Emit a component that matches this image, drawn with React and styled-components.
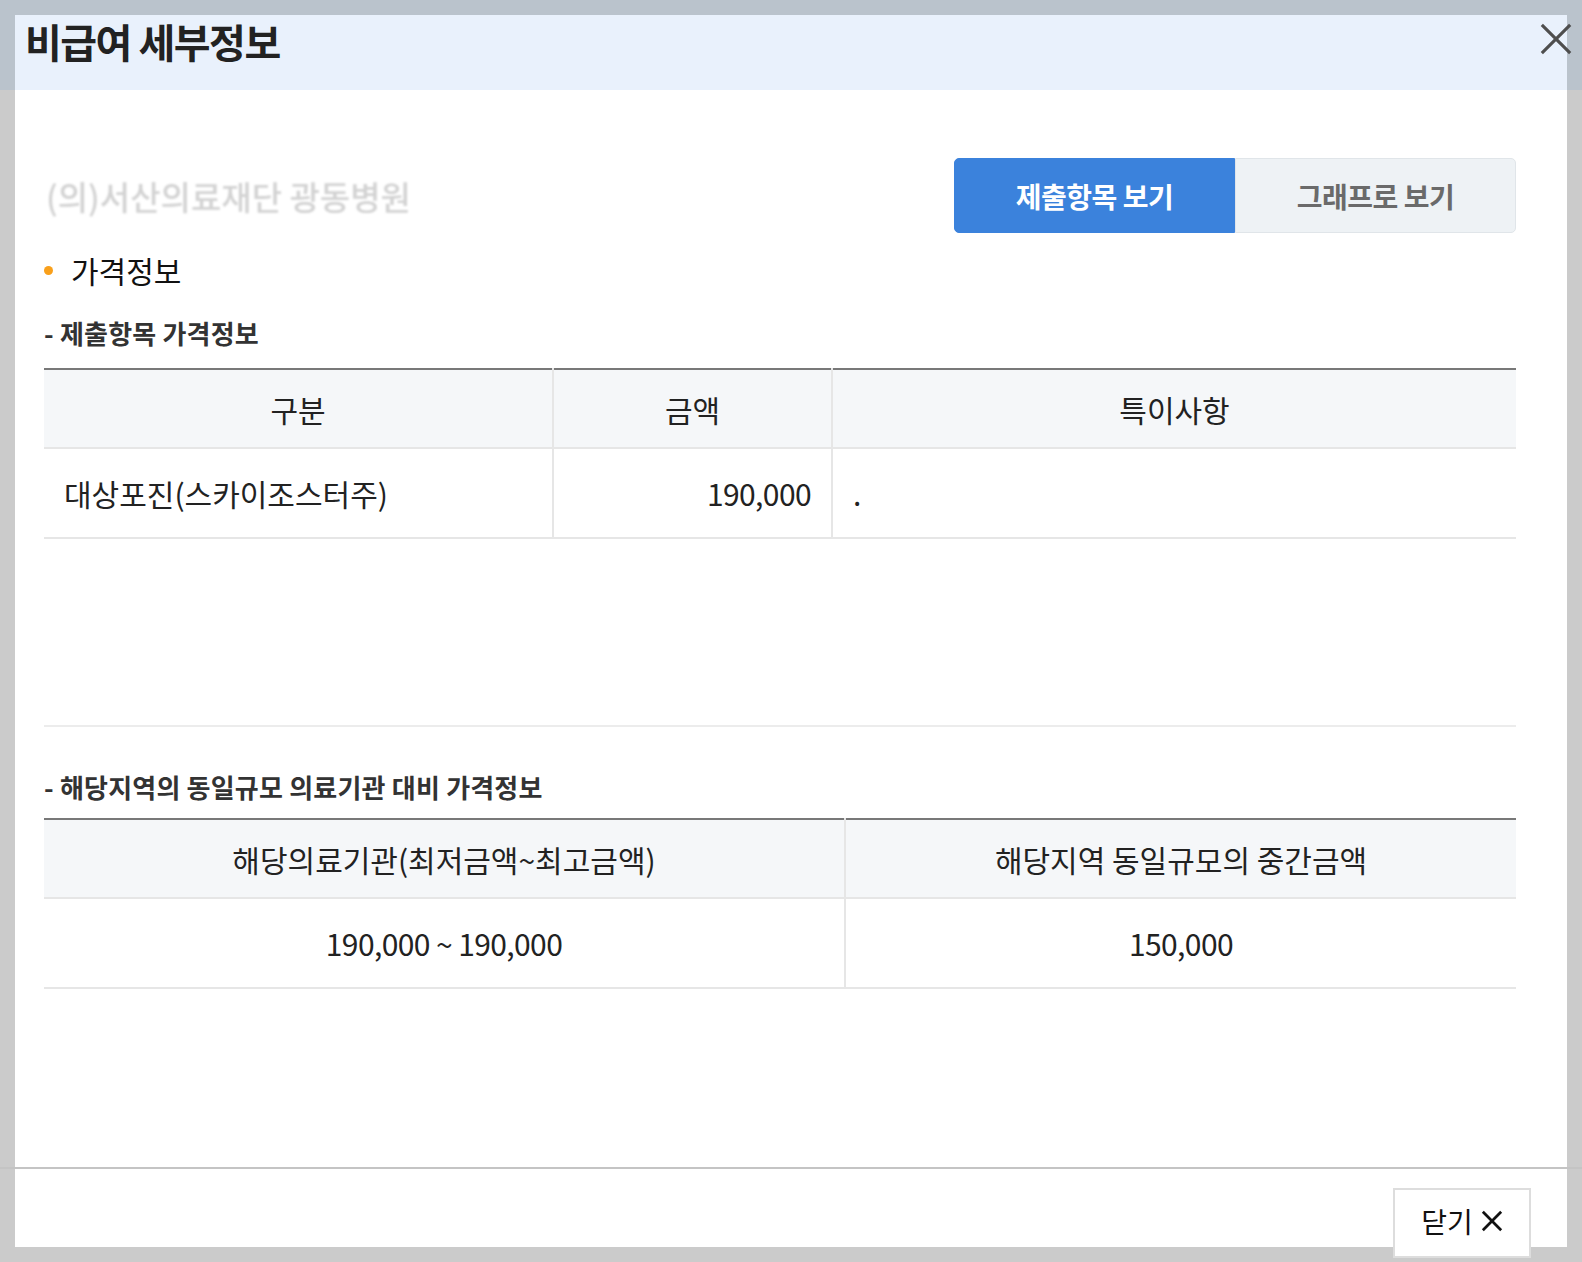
import React from 'react'
import styled, { createGlobalStyle } from 'styled-components'

const GlobalStyle = createGlobalStyle`
  * {
    box-sizing: border-box;
  }

  body {
    margin: 0;
    font-family: 'Noto Sans CJK KR', 'Noto Sans', sans-serif;
    color: #222;
  }
`

const Backdrop = styled.div`
  height: 1262px;
  padding: 15px;
  background: linear-gradient(to bottom, #bac3cc 0, #bac3cc 90px, #cbcbcb 90px);
  overflow: hidden;
`

const Modal = styled.div`
  position: relative;
  height: 100%;
  background: #fff;
  display: flex;
  flex-direction: column;
`

const Header = styled.div`
  height: 75px;
  flex-shrink: 0;
  background: #e9f1fc;
  padding: 0 10px;
`

const Title = styled.h1`
  margin: 0;
  font-size: 40px;
  line-height: 52px;
  font-weight: 700;
  letter-spacing: -1.5px;
  color: #222;
`

const CloseIcon = styled.button`
  position: absolute;
  top: 7px;
  right: -6px;
  width: 34px;
  height: 34px;
  padding: 0;
  border: 0;
  background: none;
  color: #4e4e4e;
  cursor: pointer;
`

const Body = styled.div`
  flex: 1;
  padding: 68px 51px 0 29px;
`

const TopRow = styled.div`
  display: flex;
  align-items: center;
  justify-content: space-between;
`

const HospitalName = styled.div`
  padding-left: 2px;
  font-size: 33px;
  font-weight: 500;
  color: #d2d2d2;
  filter: blur(1px);
`

const Tabs = styled.div`
  display: flex;
  width: 562px;
`

const Tab = styled.button`
  flex: 1;
  height: 75px;
  padding: 0;
  font-family: inherit;
  font-size: 28px;
  font-weight: 700;
  letter-spacing: -0.5px;
  cursor: pointer;
  border: 1px solid ${p => (p.$active ? '#3b82dc' : '#e0e5e9')};
  background: ${p => (p.$active ? '#3b82dc' : '#eef2f5')};
  color: ${p => (p.$active ? '#fff' : '#6a6a6a')};
  border-radius: ${p => (p.$active ? '5px 0 0 5px' : '0 5px 5px 0')};
`

const SectionTitle = styled.h2`
  display: flex;
  align-items: center;
  gap: 18px;
  margin: 17px 0 0;
  font-size: 30px;
  line-height: 40px;
  font-weight: 400;
  color: #111;

  &::before {
    content: '';
    width: 9px;
    height: 9px;
    border-radius: 50%;
    background: #f9a01b;
  }
`

const SubTitle = styled.h3`
  margin: ${p => p.$top}px 0 ${p => p.$bottom}px;
  font-size: 26px;
  line-height: 34px;
  font-weight: 700;
  letter-spacing: 0.2px;
  color: #333;
`

const Table = styled.table`
  width: 100%;
  border-collapse: collapse;
  table-layout: fixed;
  border-top: 2px solid #787878;
`

const Th = styled.th`
  height: 79px;
  padding: 0 20px;
  background: #f5f7f9;
  font-size: 30px;
  font-weight: 400;
  color: #222;
  text-align: center;
  border-bottom: 2px solid #e6e6e6;
  border-left: 2px solid #e6e6e6;

  &:first-child {
    border-left: 0;
  }
`

const Td = styled.td`
  height: 90px;
  padding: 0 20px;
  font-size: 30px;
  color: #222;
  text-align: ${p => p.$align || 'left'};
  letter-spacing: ${p => (p.$num ? '-0.6px' : '0')};
  border-bottom: 2px solid #e6e6e6;
  border-left: 2px solid #e6e6e6;

  &:first-child {
    border-left: 0;
  }
`

const Spacer = styled.div`
  height: 188px;
  border-bottom: 2px solid #ececec;
`

const Footer = styled.div`
  position: relative;
  height: 80px;
  flex-shrink: 0;
  display: flex;
  justify-content: flex-end;
  align-items: flex-start;
  padding: 21px 36px 0 0;

  &::before {
    content: '';
    position: absolute;
    top: 0;
    left: -15px;
    right: -15px;
    height: 2px;
    background: #c4c4c4;
  }
`

const CloseButton = styled.button`
  display: flex;
  align-items: center;
  justify-content: center;
  gap: 8px;
  width: 138px;
  height: 70px;
  padding: 0 0 4px;
  background: #fff;
  border: 2px solid #dddddd;
  font-family: inherit;
  font-size: 28px;
  color: #111;
  cursor: pointer;
`

const XIcon = ({ size, stroke }) => (
  <svg width={size} height={size} viewBox="0 0 24 24" fill="none">
    <path d="M2 2L22 22M22 2L2 22" stroke="currentColor" strokeWidth={stroke} strokeLinecap="butt" />
  </svg>
)

const App = () => {
  return (
    <>
      <GlobalStyle />
      <Backdrop>
        <Modal>
          <Header>
            <Title>비급여 세부정보</Title>
          </Header>
          <CloseIcon aria-label="닫기">
            <XIcon size={34} stroke={2.2} />
          </CloseIcon>

          <Body>
            <TopRow>
              <HospitalName>(의)서산의료재단 광동병원</HospitalName>
              <Tabs>
                <Tab $active>제출항목 보기</Tab>
                <Tab>그래프로 보기</Tab>
              </Tabs>
            </TopRow>

            <SectionTitle>가격정보</SectionTitle>

            <SubTitle $top={26} $bottom={18}>- 제출항목 가격정보</SubTitle>
            <Table>
              <colgroup>
                <col style={{ width: '509px' }} />
                <col style={{ width: '279px' }} />
                <col />
              </colgroup>
              <thead>
                <tr>
                  <Th>구분</Th>
                  <Th>금액</Th>
                  <Th>특이사항</Th>
                </tr>
              </thead>
              <tbody>
                <tr>
                  <Td>대상포진(스카이조스터주)</Td>
                  <Td $align="right" $num>190,000</Td>
                  <Td>.</Td>
                </tr>
              </tbody>
            </Table>

            <Spacer />

            <SubTitle $top={43} $bottom={14}>- 해당지역의 동일규모 의료기관 대비 가격정보</SubTitle>
            <Table>
              <colgroup>
                <col style={{ width: '801px' }} />
                <col />
              </colgroup>
              <thead>
                <tr>
                  <Th>해당의료기관(최저금액~최고금액)</Th>
                  <Th>해당지역 동일규모의 중간금액</Th>
                </tr>
              </thead>
              <tbody>
                <tr>
                  <Td $align="center" $num>190,000 ~ 190,000</Td>
                  <Td $align="center" $num>150,000</Td>
                </tr>
              </tbody>
            </Table>
          </Body>

          <Footer>
            <CloseButton>
              닫기
              <XIcon size={22} stroke={3} />
            </CloseButton>
          </Footer>
        </Modal>
      </Backdrop>
    </>
  )
}

export default App
